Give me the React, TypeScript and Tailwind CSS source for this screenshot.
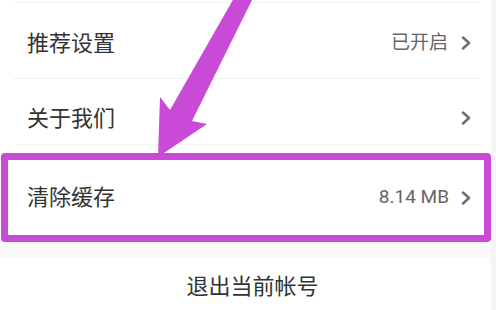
import React from "react";

const Chevron = () => (
  <svg width="10" height="14" viewBox="0 0 10 14" className="shrink-0">
    <polyline points="2,1.5 8,7 2,12.5" fill="none" stroke="#6f6f6f" strokeWidth="2.5" strokeLinecap="round" strokeLinejoin="round" />
  </svg>
);

export default function App() {
  const font = { fontFamily: 'Roboto, "Noto Sans CJK SC", sans-serif' };
  return (
    <div className="relative w-[496px] h-[310px] overflow-hidden bg-[#f4f4f4]" style={font}>
      <div className="w-[491px] h-full bg-white flex flex-col">
        <div className="h-[2px]" />
        <div className="mx-[13px] h-px bg-[#f0f0f0]" />
        <div className="h-[75px] pt-[5px] flex items-center justify-between pl-[27px] pr-[20px]">
          <span className="text-[22px] text-[#333]">推荐设置</span>
          <div className="flex items-center gap-[13px]">
            <span className="text-[19px] text-[#666]">已开启</span>
            <Chevron />
          </div>
        </div>
        <div className="mx-[13px] h-px bg-[#f0f0f0]" />
        <div className="h-[65px] pt-[13px] flex items-center justify-between pl-[27px] pr-[20px]">
          <span className="text-[22px] text-[#333]">关于我们</span>
          <Chevron />
        </div>
        <div className="mx-[13px] h-px bg-[#f5f5f5]" />
        <div className="mt-[8px] ml-[1px] w-[490px] h-[89px] border-[7px] border-[#c84ad6] rounded-[4px] flex items-center justify-between pl-[19px] pr-[13px]">
          <span className="text-[22px] text-[#333]">清除缓存</span>
          <div className="flex items-center gap-[12px]">
            <span className="text-[19px] text-[#666]">8.14 MB</span>
            <Chevron />
          </div>
        </div>
        <div className="h-[16px] bg-[#f9f9f9]" />
        <div className="flex-1 pt-[4px] pl-[14px] flex items-center justify-center">
          <span className="text-[22px] text-[#333]">退出当前帐号</span>
        </div>
      </div>
      <svg className="absolute left-0 top-0 pointer-events-none" width="496" height="310" viewBox="0 0 496 310">
        <polygon points="234,-2 253,-2 192,121 207,124 158,157 160,97 170,110" fill="#c84ad6" />
      </svg>
    </div>
  );
}
